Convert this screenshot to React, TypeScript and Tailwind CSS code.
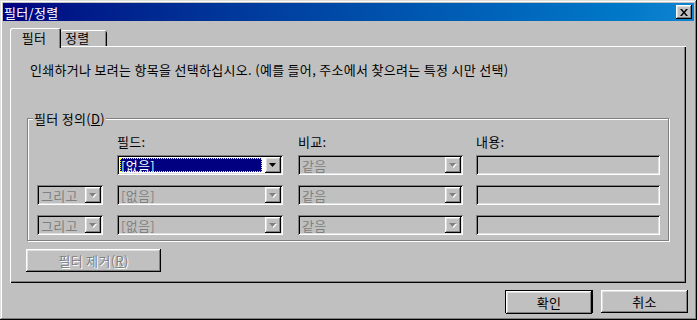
import type { ReactNode } from 'react'

const raised =
  'shadow-[inset_-1px_-1px_0_#000,inset_1px_1px_0_#fff,inset_-2px_-2px_0_#808080,inset_2px_2px_0_#dfdfdf]'
const sunken =
  'shadow-[inset_1px_1px_0_#808080,inset_-1px_-1px_0_#fff,inset_2px_2px_0_#000,inset_-2px_-2px_0_#dfdfdf]'

function Arrow({ disabled }: { disabled?: boolean }) {
  return (
    <svg width="8" height="5" viewBox="0 0 8 5" className="overflow-visible">
      {disabled && <path d="M1 1h7L4.5 5z" fill="#fff" />}
      <path d="M0 0h7L3.5 4z" fill={disabled ? '#808080' : '#000'} />
    </svg>
  )
}

interface ComboProps {
  text: string
  width: string
  disabled?: boolean
  selected?: boolean
}

function Combo({ text, width, disabled, selected }: ComboProps) {
  return (
    <div className={`flex h-5 p-[2px] ${width} ${sunken} ${disabled ? 'bg-[#c0c0c0]' : 'bg-white'}`}>
      {selected ? (
        <div className="m-px flex w-[142px] items-center border border-dotted border-[#ffff00] bg-[#000080] text-white">
          {text}
        </div>
      ) : (
        <div className={`m-px flex flex-1 items-center pl-[1px] ${disabled ? 'text-[#808080]' : 'text-black'}`}>
          {text}
        </div>
      )}
      <div className={`ml-auto flex w-4 items-center justify-center bg-[#c0c0c0] ${raised}`}>
        <Arrow disabled={disabled} />
      </div>
    </div>
  )
}

function Button({ children, className }: { children: ReactNode; className: string }) {
  return (
    <div className={`flex h-[23px] items-center justify-center bg-[#c0c0c0] ${raised} ${className}`}>
      {children}
    </div>
  )
}

export default function App() {
  return (
    <div
      className={`flex h-[320px] w-[697px] flex-col bg-[#c0c0c0] p-[3px] text-[13px] leading-[15px] tracking-[0.3px] text-black font-['Noto_Sans_CJK_KR','Noto_Sans',sans-serif] shadow-[inset_-1px_-1px_0_#000,inset_1px_1px_0_#dfdfdf,inset_-2px_-2px_0_#808080,inset_2px_2px_0_#fff]`}
    >
      {/* 제목 표시줄 */}
      <div className="flex h-[18px] items-center justify-between bg-gradient-to-r from-[#000080] to-[#1084d0] pl-[1px] pr-[2px]">
        <span className="text-white">필터/정렬</span>
        <div className={`flex h-[14px] w-4 items-center justify-center bg-[#c0c0c0] ${raised}`}>
          <svg width="8" height="7" viewBox="0 0 8 7">
            <path d="M0 0h2l2 2.5L6 0h2L5 3.5 8 7H6L4 4.5 2 7H0l3-3.5z" fill="#000" />
          </svg>
        </div>
      </div>

      {/* 탭 */}
      <div className="ml-[7px] mt-[7px] flex h-[18px] items-start">
        <div className="relative z-10 flex h-[20px] w-[51px] items-start justify-center rounded-t-[2px] bg-[#c0c0c0] pt-[2px] pr-[3px] shadow-[inset_1px_1px_0_#fff,inset_-1px_0_0_#000,inset_-2px_0_0_#808080]">
          필터
        </div>
        <div className="mt-[2px] flex h-[16px] w-[46px] items-start justify-start rounded-t-[2px] pl-[4px] shadow-[inset_0_1px_0_#fff,inset_-1px_0_0_#000,inset_-2px_0_0_#808080]">
          정렬
        </div>
      </div>

      <div className="ml-[7px] flex h-[237px] w-[676px] flex-col shadow-[inset_1px_1px_0_#fff,inset_-1px_-1px_0_#000,inset_-2px_-2px_0_#808080]">
        <div className="pl-[20px] pt-[16px]">
          인쇄하거나 보려는 항목을 선택하십시오. (예를 들어, 주소에서 찾으려는 특정 시만 선택)
        </div>

        {/* 필터 정의 */}
        <div className="relative ml-[17px] mt-[41px] flex h-[123px] w-[642px] flex-col border border-[#808080] pl-[9px] pt-[14px] shadow-[1px_1px_0_#fff,inset_1px_1px_0_#fff]">
          <span className="absolute -top-[8px] left-[5px] bg-[#c0c0c0] px-[1px]">
            필터 정의(<span className="underline">D</span>)
          </span>
          <div className="flex h-[16px] items-center">
            <div className="w-[80px]" />
            <div className="w-[181px]">필드:</div>
            <div className="w-[178px]">비교:</div>
            <div>내용:</div>
          </div>
          {[0, 1, 2].map((i) => (
            <div key={i} className={`flex items-center ${i === 0 ? 'mt-[6px]' : 'mt-[10px]'}`}>
              {i === 0 ? <div className="w-[66px]" /> : <Combo text="그리고" width="w-[66px]" disabled />}
              <div className="ml-[14px]">
                <Combo text="[없음]" width="w-[166px]" selected={i === 0} disabled={i !== 0} />
              </div>
              <div className="ml-[15px]">
                <Combo text="같음" width="w-[165px]" disabled />
              </div>
              <div className={`ml-[13px] h-5 w-[184px] ${sunken}`} />
            </div>
          ))}
        </div>

        <Button className="ml-[16px] mt-[8px] w-[135px] text-[#808080] [text-shadow:1px_1px_0_#fff]">
          필터 제거(<span className="underline">R</span>)
        </Button>
      </div>

      {/* 확인 / 취소 */}
      <div className="mt-[7px] flex justify-end gap-[8px] pr-[6px]">
        <div className="h-[23px] w-[88px] border border-black">
          <Button className="h-[21px] w-[86px]">확인</Button>
        </div>
        <Button className="w-[87px]">취소</Button>
      </div>
    </div>
  )
}
